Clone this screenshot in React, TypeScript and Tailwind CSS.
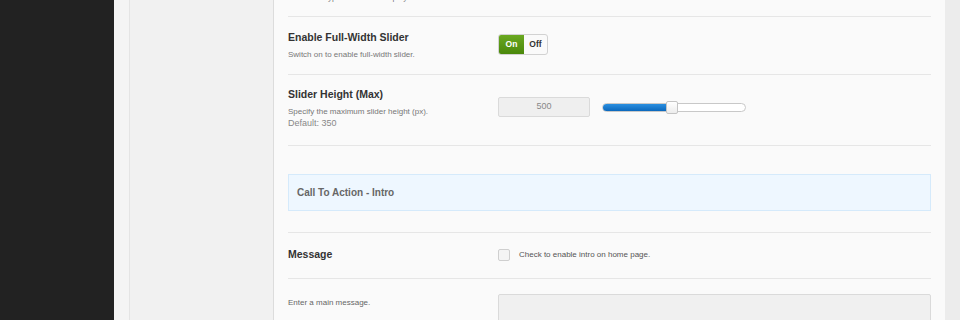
const font = { fontFamily: '"Liberation Sans", Arial, sans-serif' };

function Toggle() {
  return (
    <div className="flex h-[21px] w-[50px] overflow-hidden rounded-[3px] border border-[#d2d2d2] bg-[#fafafa] text-[8.5px] font-bold">
      <div className="flex w-[25px] items-center justify-center bg-gradient-to-b from-[#6aa820] to-[#4a880a] text-white">
        On
      </div>
      <div className="flex flex-1 items-center justify-center text-[#333]">Off</div>
    </div>
  );
}

function RangeSlider({ value }: { value: number }) {
  return (
    <div className="relative h-[9px] w-[144px] rounded-full border border-[#c8c8c8] bg-white">
      <div
        className="h-full rounded-l-full bg-gradient-to-b from-[#2a8fe0] to-[#0a68bc]"
        style={{ width: `${value}%` }}
      />
      <div
        className="absolute top-[-3px] h-[13px] w-[12px] rounded-[2px] border border-[#c4c4c4] bg-gradient-to-b from-white to-[#ececec]"
        style={{ left: `calc(${value}% - 5px)` }}
      />
    </div>
  );
}

export default function App() {
  return (
    <div className="flex h-[320px] w-[960px] overflow-hidden" style={font}>
      {/* admin sidebar */}
      <div className="w-[114px] shrink-0 bg-[#222222]" />
      <div className="w-[16px] shrink-0 border-r border-[#e4e4e4] bg-[#f4f4f4]" />
      <div className="w-[144px] shrink-0 border-r border-[#dcdcdc] bg-[#f1f1f1]" />

      {/* options panel */}
      <div className="flex-1 bg-[#fafafa] px-[14px]">
        <div className="-mt-[7px] h-[23px] text-[8px] leading-[10px] text-[#777]">
          Select the type of slider to display.
        </div>

        {/* Enable full-width slider */}
        <div className="flex h-[58px] border-t border-[#e6e6e6]">
          <div className="w-[210px] shrink-0 pt-[14px]">
            <div className="text-[10.5px] font-bold leading-[13px] text-[#333]">Enable Full-Width Slider</div>
            <div className="mt-[6px] text-[8px] leading-[10px] text-[#777]">Switch on to enable full-width slider.</div>
          </div>
          <div className="pt-[17px]">
            <Toggle />
          </div>
        </div>

        {/* Slider height */}
        <div className="flex h-[71px] border-t border-[#e6e6e6]">
          <div className="w-[210px] shrink-0 pt-[13px]">
            <div className="text-[10.5px] font-bold leading-[13px] text-[#333]">Slider Height (Max)</div>
            <div className="mt-[6px] text-[8px] leading-[10px] text-[#777]">Specify the maximum slider height (px).</div>
            <div className="mt-[1px] text-[9px] leading-[11px] text-[#888]">Default: 350</div>
          </div>
          <div className="flex items-center gap-[12px] self-start pt-[22px]">
            <div className="flex h-[20px] w-[92px] items-center justify-center rounded-[2px] border border-[#dadada] bg-[#efefef] text-[9px] text-[#888]">
              500
            </div>
            <RangeSlider value={48} />
          </div>
        </div>

        {/* Section heading */}
        <div className="border-t border-[#e6e6e6] pt-[28px] pb-[21px]">
          <div className="flex h-[37px] items-center border border-[#d5eafb] bg-[#eef7ff] pl-[8px] text-[10px] font-bold text-[#666]">
            Call To Action - Intro
          </div>
        </div>

        {/* Message */}
        <div className="flex h-[46px] border-t border-[#e6e6e6]">
          <div className="w-[210px] shrink-0 pt-[15px] text-[10.5px] font-bold leading-[13px] text-[#333]">Message</div>
          <div className="flex items-center gap-[9px] self-start pt-[16px]">
            <div className="h-[12px] w-[12px] rounded-[2px] border border-[#cfcfcf] bg-[#f4f4f4]" />
            <span className="text-[8px] leading-[10px] text-[#555]">Check to enable intro on home page.</span>
          </div>
        </div>

        <div className="flex border-t border-[#e6e6e6]">
          <div className="w-[210px] shrink-0 pt-[19px] text-[8px] leading-[10px] text-[#666]">Enter a main message.</div>
          <div className="mt-[15px] h-[60px] flex-1 rounded-[2px] border border-[#dadada] bg-[#f0f0f0]" />
        </div>
      </div>

      <div className="w-[15px] shrink-0 bg-[#ececec]" />
    </div>
  );
}
